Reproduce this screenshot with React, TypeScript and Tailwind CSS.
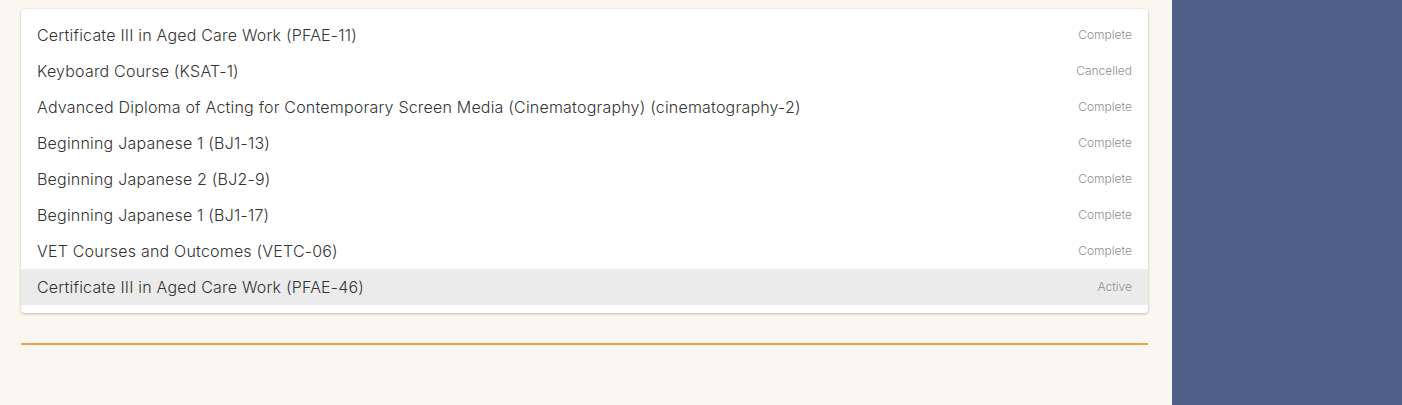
import React from "react";

const rows: { name: string; status: string; active?: boolean }[] = [
  { name: "Certificate III in Aged Care Work (PFAE-11)", status: "Complete" },
  { name: "Keyboard Course (KSAT-1)", status: "Cancelled" },
  { name: "Advanced Diploma of Acting for Contemporary Screen Media (Cinematography) (cinematography-2)", status: "Complete" },
  { name: "Beginning Japanese 1 (BJ1-13)", status: "Complete" },
  { name: "Beginning Japanese 2 (BJ2-9)", status: "Complete" },
  { name: "Beginning Japanese 1 (BJ1-17)", status: "Complete" },
  { name: "VET Courses and Outcomes (VETC-06)", status: "Complete" },
  { name: "Certificate III in Aged Care Work (PFAE-46)", status: "Active", active: true },
];

export default function App() {
  return (
    <div className="flex h-[405px] w-full bg-[#faf7f0] font-['Inter',sans-serif]">
      <div className="flex-1 pl-[21px] pr-[24px] pt-[9px]">
        <div className="rounded-[4px] bg-white py-2 shadow-[0_1px_3px_rgba(0,0,0,0.25)]">
          {rows.map((r, i) => (
            <div
              key={i}
              className={`flex h-9 items-center justify-between px-4 ${r.active ? "bg-[#ebebeb]" : ""}`}
            >
              <span className="text-[16px] font-light tracking-[0.2px] text-[#333333]">{r.name}</span>
              <span className="text-[12px] font-light text-[#8f8f8f]">{r.status}</span>
            </div>
          ))}
        </div>
        <div className="mt-[30px] h-[2px] bg-[#eea04a]" />
      </div>
      <div className="h-full w-[230px] bg-[#4f5f89]" />
    </div>
  );
}
